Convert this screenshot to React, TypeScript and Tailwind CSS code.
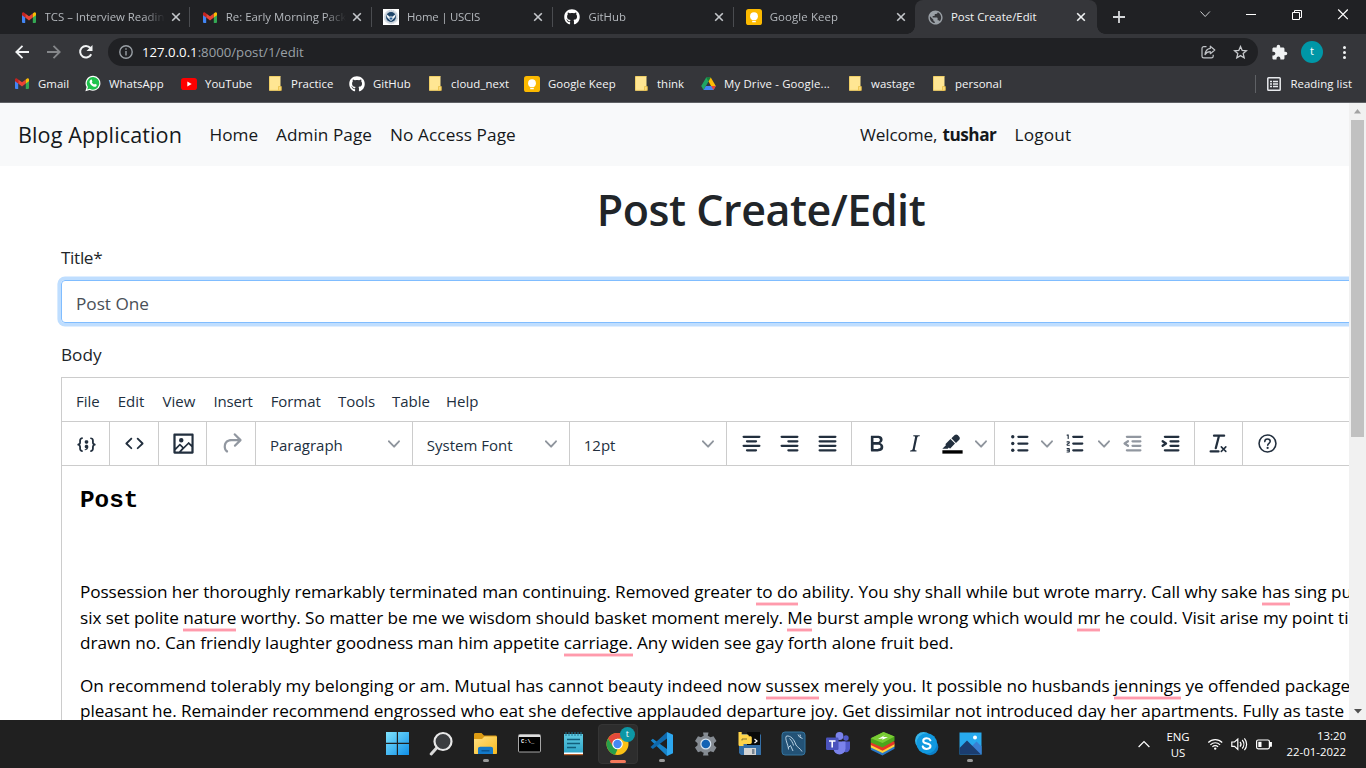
import type { ReactNode } from "react";
import { FaGithub } from "react-icons/fa";
import { MdExtension, MdPublic } from "react-icons/md";

/* ---------- brand and site icons ---------- */

function Gmail() {
  return (
    <svg width="14" height="11" viewBox="0 0 14 11">
      <path d="M0 1.6V10a1 1 0 0 0 1 1h2.2V4z" fill="#4285f4" />
      <path d="M14 1.6V10a1 1 0 0 1-1 1h-2.2V4z" fill="#34a853" />
      <path d="M3.2 1.4 7 4.3l3.8-2.9v4.2L7 8.5 3.2 5.6z" fill="#ea4335" />
      <path d="M0 1.6C0 .2 1.6-.4 2.6.9l.6.5v4.2L0 3.2z" fill="#c5221f" />
      <path d="M14 1.6c0-1.4-1.6-2-2.6-.7l-.6.5v4.2L14 3.2z" fill="#fbbc04" />
    </svg>
  );
}

function Seal() {
  return (
    <svg width="16" height="16" viewBox="0 0 16 16">
      <path d="M0 0h16v16H0z" fill="#fff" />
      <circle cx="8" cy="8" r="7.2" fill="#c9d1da" />
      <circle cx="8" cy="8" r="6.600" fill="none" stroke="#eef1f4" strokeDasharray="1 1" />
      <circle cx="8" cy="8" r="4.900" fill="#1d4468" />
      <path d="M3.500 5.300 7.200 8l.8-1.500L8.800 8l3.700-2.700c0 2.200-.7 3.700-2.300 4.700L8 12 5.800 10C4.200 9 3.500 7.500 3.500 5.300z" fill="#eef3f7" />
      <path d="M6.600 8.500h2.800v1.300L8 11 6.600 9.800z" fill="#2b5f94" />
    </svg>
  );
}

function Keep() {
  return (
    <svg width="16" height="16" viewBox="0 0 16 16">
      <rect width="16" height="16" rx="2.6" fill="#fbb900" />
      <circle cx="8" cy="7.200" r="3.900" fill="#fff" />
      <path d="M6.200 9h3.600v2.200H6.200zM6.200 12h3.600v1.300H6.200z" fill="#fff" />
    </svg>
  );
}

function WhatsApp() {
  return (
    <svg width="17" height="17" viewBox="0 0 17 17">
      <path d="M8.700.3a8 8 0 0 0-7 12L.4 16.700l4.500-1.200A8 8 0 1 0 8.700.3z" fill="#fff" />
      <path d="M8.700 1.600a6.700 6.700 0 0 0-5.600 10.500l-.8 2.700 2.800-.7A6.700 6.700 0 1 0 8.700 1.600z" fill="#1fc24c" />
      <path d="M6.100 4.600c.5-.4 1-.3 1.200.2l.5 1.200c.1.400-.2.700-.6 1.200.6 1.200 1.500 2 2.600 2.400.5-.6.700-.9 1.100-.7l1.300.7c.5.300.3 1.200-.2 1.700-.8.8-2.100.8-3.700 0-1.700-.9-3-2.500-3.400-3.900-.2-1.200.4-2.200 1.200-2.800z" fill="#fff" />
    </svg>
  );
}

function YouTube() {
  return (
    <svg width="16" height="12" viewBox="0 0 16 12">
      <rect width="16" height="12" rx="2.800" fill="#f00" />
      <path d="M6.300 3.500 10.700 6 6.300 8.500z" fill="#fff" />
    </svg>
  );
}

function Folder() {
  return (
    <svg width="13" height="15" viewBox="0 0 13 15">
      <path d="M.5.5h11v14H.5z" fill="#ffe693" />
      <path d="M.5.500h11M.5.500v14M.5 14.300H11" stroke="#f0cf66" />
      <path d="M9.500 10.500h2.800v3.900H9.500z" fill="#fbdb7b" stroke="#e8bf47" strokeWidth=".8" />
    </svg>
  );
}

function Drive() {
  return (
    <svg width="15" height="14" viewBox="0 0 15 14">
      <path d="M5.200.400h4.600L7.500 4.400 2.600 13 .2 9z" fill="#1fa463" />
      <path d="M5.200.400h4.600L7.500 4.400z" fill="#188038" />
      <path d="M9.800.400 14.800 9h-4.700L7.500 4.400z" fill="#fbbc04" />
      <path d="M4.900 9h9.900l-2.300 4H2.600z" fill="#4285f4" />
      <path d="M10.100 9h4.700l-2.300 4z" fill="#ea4335" />
    </svg>
  );
}

function Cross({ color }: { color: string }) {
  return (
    <svg width="10" height="10" viewBox="0 0 10 10" stroke={color} strokeWidth="1.600">
      <path d="m1.200 1.200 7.600 7.600M8.800 1.200 1.200 8.800" />
    </svg>
  );
}

/* ---------- browser chrome ---------- */

const tabs: { icon: ReactNode; title: string; tracking: string; line: string }[] = [
  { icon: <Gmail />, title: "TCS – Interview Readiness", tracking: "tracking-normal", line: "bg-[#4a4c50]" },
  { icon: <Gmail />, title: "Re: Early Morning Package", tracking: "tracking-normal", line: "bg-[#4a4c50]" },
  { icon: <Seal />, title: "Home | USCIS", tracking: "tracking-[-0.21px]", line: "bg-[#4a4c50]" },
  { icon: <FaGithub size={16} color="#fff" />, title: "GitHub", tracking: "tracking-normal", line: "bg-[#4a4c50]" },
  { icon: <Keep />, title: "Google Keep", tracking: "tracking-[0.12px]", line: "bg-transparent" },
];

function TabStrip() {
  return (
    <div className="flex h-[34px] shrink-0 bg-[#202124] pl-[9px]">
      {tabs.map((tab, i) => (
        <div key={i} className="flex w-[181.3px] shrink-0 items-center pl-[11.5px]">
          <span className="flex w-4 shrink-0 justify-center">{tab.icon}</span>
          <span className={`ml-2 w-[120px] overflow-hidden whitespace-nowrap text-[11.4px] text-[#b4b8bd] [mask-image:linear-gradient(to_right,black_82%,transparent)] ${tab.tracking}`}>
            {tab.title}
          </span>
          <span className="ml-[6px]"><Cross color="#c4c7cb" /></span>
          <span className={`ml-auto h-5 w-px ${tab.line}`} />
        </div>
      ))}
      <div className="relative -ml-[0.5px] flex w-[182px] shrink-0 items-center rounded-t-lg bg-[#35363a] pl-3">
        <span className="absolute bottom-0 left-[-8px] size-2 bg-[radial-gradient(circle_at_0_0,#202124_7.5px,#35363a_8px)]" />
        <span className="absolute right-[-8px] bottom-0 size-2 bg-[radial-gradient(circle_at_100%_0,#202124_7.5px,#35363a_8px)]" />
        <MdPublic size={17} color="#9aa0a6" />
        <span className="ml-[7px] w-[120px] text-[11.4px] text-[#f1f3f4]">Post Create/Edit</span>
        <span className="ml-[5px]"><Cross color="#f1f3f4" /></span>
      </div>
      <svg className="mt-[11px] ml-[16px]" width="12" height="12" viewBox="0 0 12 12" stroke="#d5d7da" strokeWidth="1.800">
        <path d="M6 0v12M0 6h12" />
      </svg>
      <div className="ml-auto flex pt-[9px] pr-[18px]">
        <svg width="148" height="11" viewBox="0 0 148 11" fill="none" stroke="#fff">
          <path d="m.500 2.500 4.700 5 4.700-5" stroke="#c9cbce" />
          <path d="M46 5.500h10" />
          <path d="M92.500 3.500h7v7h-7zM94.500 3V1.500h7v7H100" />
          <path d="m138.200.500 9.600 9.600M147.800.500l-9.600 9.600" strokeWidth="1.200" />
        </svg>
      </div>
    </div>
  );
}

function AddressBar() {
  return (
    <div className="flex h-9 shrink-0 items-center bg-[#35363a] pl-[15px]">
      <svg width="80" height="16" viewBox="0 0 80 16" fill="none" strokeWidth="1.800">
        <path d="M14 8H1.500M7.500 1.800 1.300 8l6.200 6.200" stroke="#f1f3f4" />
        <path d="M32 8h12.500M38.500 1.800 44.700 8l-6.200 6.200" stroke="#85878a" />
        <path d="M76.200 10.200A5.800 5.800 0 1 1 75.400 4" stroke="#f1f3f4" strokeWidth="2" />
        <path d="M77.500 1v6h-6z" fill="#f1f3f4" />
      </svg>
      <div className="ml-[13px] flex h-7 w-[1150px] items-center rounded-full bg-[#202124] pl-[11px]">
        <svg width="14" height="14" viewBox="0 0 14 14" fill="none" stroke="#9aa0a6" strokeWidth="1.400">
          <circle cx="7" cy="7" r="6.200" />
          <path d="M7 6v4.500M7 3.300v1.500" />
        </svg>
        <span className="ml-[9px] pt-px text-[13.2px] text-[#9aa0a6]"><span className="text-white">127.0.0.1</span>:8000/post/1/edit</span>
        <svg className="ml-auto" width="15" height="14" viewBox="0 0 15 14" fill="none" stroke="#c0c3c7" strokeWidth="1.200">
          <path d="M5.500 1.700H2.800c-1 0-1.800.7-1.800 1.700v7.800c0 1 .8 1.700 1.800 1.700h7.600c1 0 1.800-.7 1.800-1.700V9.800" />
          <path d="M9.300 1.200 13.800 5 9.300 8.700V6.600C6.800 6.600 5.200 7.500 4 9.600c.3-3.200 2-5.700 5.300-6.200z" strokeLinejoin="round" />
        </svg>
        <svg className="mr-[10px] ml-[17px]" width="15" height="14" viewBox="0 0 15 14" fill="none" stroke="#c8cacd" strokeWidth="1.300">
          <path d="m7.500 1.500 1.700 3.900 4.200.4-3.200 2.800 1 4.200-3.700-2.200-3.700 2.200 1-4.200-3.200-2.800 4.200-.4z" />
        </svg>
      </div>
      <span className="ml-[13px]"><MdExtension size={17} color="#f1f3f4" /></span>
      <span className="ml-[13px] flex size-[22px] items-center justify-center rounded-full bg-[#0097a7] pb-px text-[11px] text-white">t</span>
      <span className="ml-[20px] flex flex-col gap-[2px]">
        <i className="size-[3px] rounded-full bg-[#f1f3f4]" />
        <i className="size-[3px] rounded-full bg-[#f1f3f4]" />
        <i className="size-[3px] rounded-full bg-[#f1f3f4]" />
      </span>
    </div>
  );
}

const bookmarks: { icon: ReactNode; label: string; width: string }[] = [
  { icon: <Gmail />, label: "Gmail", width: "w-[71px]" },
  { icon: <WhatsApp />, label: "WhatsApp", width: "w-[96px]" },
  { icon: <YouTube />, label: "YouTube", width: "w-[86px]" },
  { icon: <Folder />, label: "Practice", width: "w-[82px]" },
  { icon: <FaGithub size={16} color="#fff" />, label: "GitHub", width: "w-[78px]" },
  { icon: <Folder />, label: "cloud_next", width: "w-[97px]" },
  { icon: <Keep />, label: "Google Keep", width: "w-[109px]" },
  { icon: <Folder />, label: "think", width: "w-[67px]" },
  { icon: <Drive />, label: "My Drive - Google...", width: "w-[147px] tracking-[0.16px]" },
  { icon: <Folder />, label: "wastage", width: "w-[84px]" },
  { icon: <Folder />, label: "personal", width: "w-[84px]" },
];

function BookmarksBar() {
  return (
    <div className="flex h-[33px] shrink-0 items-center border-b border-[#5f6165] bg-[#35363a] pb-[4px] pl-[14px] text-[11.4px] tracking-[0.05px] text-[#f4f5f6]">
      {bookmarks.map((b, i) => (
        <div key={i} className={`flex shrink-0 items-center whitespace-nowrap ${b.width}`}>
          <span className="mr-2 flex w-4 shrink-0 justify-center">{b.icon}</span>
          {b.label}
        </div>
      ))}
      <div className="ml-auto flex items-center border-l border-[#5f6165] pr-[14px] pl-[11px]">
        <svg width="14" height="14" viewBox="0 0 14 14" fill="none" stroke="#e8eaed">
          <rect x=".8" y=".8" width="12.400" height="12.400" rx=".8" strokeWidth="1.500" />
          <path d="M3 4.500h2M6 4.500h5M3 7h2M6 7h5M3 9.500h2M6 9.500h5" strokeWidth="1.300" />
        </svg>
        <span className="ml-[9px] whitespace-nowrap">Reading list</span>
      </div>
    </div>
  );
}

/* ---------- page ---------- */

function Navbar() {
  return (
    <nav className="flex h-[63px] shrink-0 items-center bg-[#f8f9fa] pl-[18px] text-[17.2px] text-[#15181b]">
      <span className="w-[191.500px] pt-[2px] text-[21.6px] tracking-[0.1px]">Blog Application</span>
      <span className="w-[66.500px]">Home</span>
      <span className="w-[114px] tracking-[0.05px]">Admin Page</span>
      <span className="w-[470px] tracking-[0.1px]">No Access Page</span>
      <span className="w-[154.500px] whitespace-nowrap tracking-[-0.15px]">Welcome, <b className="ml-px tracking-[-0.5px]">tushar</b></span>
      <span className="tracking-[0.2px]">Logout</span>
    </nav>
  );
}

function Icon({ children, color = "#222f3e" }: { children: ReactNode; color?: string }) {
  return (
    <span className="flex w-[38.4px] shrink-0 justify-center">
      <svg width="27" height="27" viewBox="0 0 24 24" fill={color}>{children}</svg>
    </span>
  );
}

function Chevron() {
  return (
    <svg width="12" height="12" viewBox="0 0 10 10" fill="#8f959d">
      <path d="M8.700 2.200c.3-.3.8-.3 1 0 .4.400.4.900 0 1.200L5.700 7.800c-.3.300-.9.300-1.200 0L.2 3.400a.8.800 0 0 1 0-1.200c.3-.3.800-.3 1.100 0L5 6l3.700-3.800z" />
    </svg>
  );
}

function SplitChevron() {
  return <span className="flex w-[18.2px] shrink-0 justify-center"><Chevron /></span>;
}

function Group({ width, children }: { width: string; children: ReactNode }) {
  return <div className={`flex shrink-0 items-center border-r border-[#ccc] pl-[5.2px] ${width}`}>{children}</div>;
}

function Select({ children }: { children: ReactNode }) {
  return (
    <div className="flex w-[156.900px] shrink-0 items-center justify-between border-r border-[#ccc] pt-[4px] pr-[12px] pl-[14px] text-[15px] text-[#222f3e]">
      <span>{children}</span>
      <span className="-mt-[4px]"><Chevron /></span>
    </div>
  );
}

function Toolbar() {
  return (
    <div className="flex h-[44px] border-b border-[#ccc]">
      <Group width="w-[48.400px]">
        <Icon><path d="M7.100 11a2.800 2.800 0 0 1-.8 2 2.800 2.800 0 0 1 .8 2v1.700c0 .3.1.6.4.8.2.3.5.4.8.4.3 0 .4.2.4.4v.8c0 .2-.1.4-.4.4-.7 0-1.400-.3-2-.8-.5-.6-.8-1.300-.8-2V15c0-.3-.1-.6-.4-.8-.2-.3-.5-.4-.8-.4a.4.4 0 0 1-.4-.4v-.8c0-.2.2-.4.4-.4.3 0 .6-.1.8-.4.3-.2.4-.5.4-.8V9.300c0-.7.3-1.400.8-2 .6-.5 1.300-.8 2-.8.3 0 .4.2.4.4v.8c0 .2-.1.4-.4.4-.3 0-.6.1-.8.4-.3.2-.4.5-.4.8V11zm9.800 0V9.300c0-.3-.1-.6-.4-.8-.2-.3-.5-.4-.8-.4a.4.4 0 0 1-.4-.4V7c0-.2.1-.4.4-.4.7 0 1.400.3 2 .8.5.6.8 1.300.8 2V11c0 .3.1.6.4.8.2.3.5.4.8.4.2 0 .4.2.4.4v.8c0 .2-.2.4-.4.4-.3 0-.6.1-.8.4-.3.2-.4.5-.4.8v1.700c0 .7-.3 1.400-.8 2-.6.5-1.300.8-2 .8a.4.4 0 0 1-.4-.4v-.8c0-.2.1-.4.4-.4.3 0 .6-.1.8-.4.3-.2.4-.5.4-.8V15a2.800 2.800 0 0 1 .8-2 2.800 2.800 0 0 1-.8-2zm-3.300-.4c0 .4-.1.8-.5 1.100-.3.3-.7.5-1.100.5-.4 0-.8-.2-1.100-.5-.4-.3-.5-.7-.5-1.100 0-.5.1-.9.5-1.200.3-.3.7-.4 1.100-.4.4 0 .8.1 1.100.4.4.3.5.7.5 1.200zM12 13c.4 0 .8.1 1.100.5.4.3.5.7.5 1.100 0 1-.1 1.600-.5 2a3 3 0 0 1-1.100 1c-.4.3-.8.4-1.100.4a.5.5 0 0 1-.5-.5V17a3 3 0 0 0 1-.2l.6-.6c-.6 0-1-.2-1.300-.5-.2-.3-.3-.7-.3-1 0-.5.1-1 .5-1.200.3-.4.7-.5 1.100-.5z" /></Icon>
      </Group>
      <Group width="w-[48.400px]">
        <Icon><path d="M9.800 15.700c.3.3.3.8 0 1-.3.4-.9.4-1.200 0l-4.400-4.100a.8.8 0 0 1 0-1.200l4.400-4.200c.3-.3.9-.3 1.200 0 .3.3.3.8 0 1.100L6 12l3.800 3.700zM14.200 15.700c-.3.3-.3.8 0 1 .4.4.9.4 1.200 0l4.400-4.100c.3-.3.3-.9 0-1.200l-4.400-4.200a.8.8 0 0 0-1.200 0c-.3.3-.3.8 0 1.100L18 12l-3.800 3.700z" /></Icon>
      </Group>
      <Group width="w-[48.600px]">
        <Icon><path d="M5 15.700l3.300-3.200c.3-.3.7-.3 1 0L12 15l4.100-4c.3-.4.8-.4 1 0l2 1.900V5H5v10.700zM5 18V19h3l2.800-2.900-2-2L5 17.900zm14-3l-2.500-2.400-6.400 6.500H19v-4zM4 3h16c.6 0 1 .4 1 1v16c0 .6-.4 1-1 1H4a1 1 0 0 1-1-1V4c0-.6.4-1 1-1zm6 8a2 2 0 1 0 0-4 2 2 0 0 0 0 4z" fillRule="evenodd" /></Icon>
      </Group>
      <Group width="w-[48.600px]">
        <Icon color="#9197a0"><path d="M17.600 10H12c-2.800 0-4.400 1.400-4.900 3.500-.4 2 .3 4 1.400 4.600a1 1 0 1 1-1 1.800c-2-1.200-2.900-4.100-2.300-6.800.6-3 3-5.100 6.800-5.100h5.600l-3.300-3.300a1 1 0 1 1 1.400-1.400l5 5a1 1 0 0 1 0 1.400l-5 5a1 1 0 0 1-1.400-1.400l3.300-3.300z" /></Icon>
      </Group>
      <Select>Paragraph</Select>
      <Select>System Font</Select>
      <Select>12pt</Select>
      <Group width="w-[125px]">
        <Icon><path d="M5 5h14a1 1 0 0 1 0 2H5a1 1 0 1 1 0-2zm3 4h8a1 1 0 0 1 0 2H8a1 1 0 1 1 0-2zm0 8h8a1 1 0 0 1 0 2H8a1 1 0 0 1 0-2zm-3-4h14a1 1 0 0 1 0 2H5a1 1 0 0 1 0-2z" /></Icon>
        <Icon><path d="M5 5h14a1 1 0 0 1 0 2H5a1 1 0 1 1 0-2zm6 4h8a1 1 0 0 1 0 2h-8a1 1 0 0 1 0-2zm0 8h8a1 1 0 0 1 0 2h-8a1 1 0 0 1 0-2zm-6-4h14a1 1 0 0 1 0 2H5a1 1 0 0 1 0-2z" /></Icon>
        <Icon><path d="M5 5h14a1 1 0 0 1 0 2H5a1 1 0 1 1 0-2zm0 4h14a1 1 0 0 1 0 2H5a1 1 0 1 1 0-2zm0 4h14a1 1 0 0 1 0 2H5a1 1 0 0 1 0-2zm0 4h14a1 1 0 0 1 0 2H5a1 1 0 0 1 0-2z" /></Icon>
      </Group>
      <Group width="w-[143px]">
        <Icon><path d="M7.800 19c-.3 0-.5 0-.6-.2l-.2-.5V5.700c0-.2 0-.4.2-.5l.6-.2h5c1.500 0 2.700.3 3.500 1 .7.6 1.100 1.400 1.100 2.500a3 3 0 0 1-.6 1.900c-.4.6-1 1-1.600 1.200.4.1.9.3 1.300.6s.8.7 1 1.200c.4.4.5 1 .5 1.600 0 1.300-.4 2.300-1.300 3-.8.7-2.100 1-3.800 1H7.800zm5-8.300c.6 0 1.200-.1 1.600-.5.4-.3.6-.7.6-1.300 0-1.100-.8-1.700-2.300-1.700H9.300v3.500h3.400zm.5 6c.7 0 1.300-.1 1.700-.4.4-.4.6-.9.6-1.500s-.2-1-.7-1.400c-.4-.3-1-.4-2-.4H9.400v3.800h4z" fillRule="evenodd" /></Icon>
        <Icon><path d="M16.700 4.700l-.1.900h-.3c-.6 0-1 0-1.400.3-.3.3-.4.6-.5 1.100l-2.100 9.800v.6c0 .5.4.8 1.400.8h.2l-.2.8H8l.2-.8h.2c1.100 0 1.800-.5 2-1.500l2-9.800.1-.5c0-.6-.4-.8-1.400-.8h-.3l.2-.9h5.700z" fillRule="evenodd" /></Icon>
        <Icon>
          <path d="M3 18h18v3H3z" fill="#000" />
          <path d="M7.700 16.700H3l3.300-3.300-.7-.8L10.200 8l4 4.100-4 4.200c-.2.2-.6.2-.8 0l-.6-.7-1.100 1.100zm5-7.500L11 7.400l3-2.900a2 2 0 0 1 2.600 0L18 6c.7.7.7 2 0 2.700l-2.900 2.900-1.800-1.800-.5-.6" />
        </Icon>
        <SplitChevron />
      </Group>
      <Group width="w-[199.900px]">
        <Icon>
          <path d="M11 5h8a1 1 0 0 1 0 2h-8a1 1 0 0 1 0-2zm0 6h8a1 1 0 0 1 0 2h-8a1 1 0 0 1 0-2zm0 6h8a1 1 0 0 1 0 2h-8a1 1 0 0 1 0-2z" />
          <circle cx="6" cy="6" r="1.500" /><circle cx="6" cy="12" r="1.500" /><circle cx="6" cy="18" r="1.500" />
        </Icon>
        <SplitChevron />
        <Icon><path d="M10 17h8c.6 0 1 .4 1 1s-.4 1-1 1h-8a1 1 0 0 1 0-2zm0-6h8c.6 0 1 .4 1 1s-.4 1-1 1h-8a1 1 0 0 1 0-2zm0-6h8c.6 0 1 .4 1 1s-.4 1-1 1h-8a1 1 0 1 1 0-2zM6 4v3.500c0 .3-.2.5-.5.5a.5.5 0 0 1-.5-.5V5h-.5a.5.5 0 0 1 0-1H6zm-1 8.800l.2.2h1.300c.3 0 .5.2.5.5s-.2.5-.5.5H4.900a1 1 0 0 1-.9-1V13c0-.4.3-.8.6-1l1.200-.4.2-.3a.2.2 0 0 0-.2-.2H4.500a.5.5 0 0 1-.5-.5c0-.3.2-.5.5-.5h1.600c.5 0 .9.4.9 1v.1c0 .4-.3.8-.6 1l-1.200.4-.2.3zM7 17v2c0 .6-.4 1-1 1H4.500a.5.5 0 0 1 0-1h1.200c.2 0 .3-.1.3-.3 0-.2-.1-.3-.3-.3H4.400a.4.4 0 1 1 0-.8h1.300c.2 0 .3-.1.3-.3 0-.2-.1-.3-.3-.3H4.500a.5.5 0 1 1 0-1H6c.6 0 1 .4 1 1z" fillRule="evenodd" /></Icon>
        <SplitChevron />
        <Icon color="#9197a0"><path d="M7 5h12c.6 0 1 .4 1 1s-.4 1-1 1H7a1 1 0 1 1 0-2zm5 4h7c.6 0 1 .4 1 1s-.4 1-1 1h-7a1 1 0 0 1 0-2zm0 4h7c.6 0 1 .4 1 1s-.4 1-1 1h-7a1 1 0 0 1 0-2zm-5 4h12a1 1 0 0 1 0 2H7a1 1 0 0 1 0-2zm1.600-3.800a1 1 0 0 1-1.200 1.600l-3-2a1 1 0 0 1 0-1.600l3-2a1 1 0 0 1 1.200 1.600L6.800 12l1.800 1.200z" /></Icon>
        <Icon><path d="M7 5h12c.6 0 1 .4 1 1s-.4 1-1 1H7a1 1 0 1 1 0-2zm5 4h7c.6 0 1 .4 1 1s-.4 1-1 1h-7a1 1 0 0 1 0-2zm0 4h7c.6 0 1 .4 1 1s-.4 1-1 1h-7a1 1 0 0 1 0-2zm-5 4h12a1 1 0 0 1 0 2H7a1 1 0 0 1 0-2zm-.8-5-1.800-1.200a1 1 0 0 1 1.200-1.600l3 2a1 1 0 0 1 0 1.600l-3 2a1 1 0 1 1-1.200-1.600z" /></Icon>
      </Group>
      <Group width="w-[48.600px]">
        <Icon><path d="M13.200 6a1 1 0 0 1 0 .2l-2.600 10a1 1 0 0 1-1 .8h-.2a.8.8 0 0 1-.8-1l2.600-10H8a1 1 0 1 1 0-2h9a1 1 0 0 1 0 2h-3.800zM5 18h7a1 1 0 0 1 0 2H5a1 1 0 0 1 0-2zm13 1.500L16.500 18 15 19.500a.7.7 0 0 1-1-1l1.500-1.500-1.500-1.500a.7.7 0 0 1 1-1l1.500 1.500 1.500-1.500a.7.7 0 0 1 1 1L17.500 17l1.500 1.500a.7.7 0 0 1-1 1z" fillRule="evenodd" /></Icon>
      </Group>
      <div className="flex items-center pl-[5.200px]">
        <Icon>
          <g fill="none" stroke="#222f3e">
            <circle cx="12" cy="12" r="7.500" strokeWidth="1.400" />
            <path d="M9.600 10.300c0-1.500 1-2.300 2.400-2.300s2.400.9 2.400 2.100c0 1.800-2.200 1.700-2.200 3.500" strokeWidth="1.400" strokeLinecap="round" />
          </g>
          <circle cx="12.100" cy="15.900" r="1" />
        </Icon>
      </div>
    </div>
  );
}

const menu: [string, string][] = [
  ["File", "w-[41.700px]"],
  ["Edit", "w-[44.800px]"],
  ["View", "w-[51px]"],
  ["Insert", "w-[57.200px] tracking-[-0.2px]"],
  ["Format", "w-[67.300px] tracking-[-0.08px]"],
  ["Tools", "w-[54px]"],
  ["Table", "w-[54px]"],
  ["Help", "w-[54px]"],
];

function Mark({ children }: { children: ReactNode }) {
  return (
    <span className="relative">
      {children}
      <span className="absolute -bottom-[3px] left-0 h-1 w-full border-y border-[#ffd3da] bg-[#ff9aac]" />
    </span>
  );
}

function Article() {
  return (
    <div className="pl-[18px] text-[17.2px] leading-[25.600px] whitespace-nowrap text-black">
      <h1 className="mt-[19px] h-[32px] font-['Liberation_Mono',monospace] text-[24.300px] leading-[32px] font-bold">Post</h1>
      <div className="mt-[62px]">
        <p className="tracking-[-0.085px]">Possession her thoroughly remarkably terminated man continuing. Removed greater <Mark>to do</Mark><span className="tracking-[-0.050px]"> ability. You shy shall while but wrote marry. Call why sake <Mark>has</Mark> sing put</span></p>
        <p className="tracking-[-0.065px]">six set polite <Mark>nature</Mark> worthy. So matter be me we wisdom should basket moment merely. <Mark>Me</Mark><span className="tracking-[-0.02px]"> burst ample wrong which would <Mark>mr</Mark> he could. Visit arise my point timed</span></p>
        <p className="tracking-[-0.035px]">drawn no. Can friendly laughter goodness man him appetite <Mark>carriage.</Mark> Any widen see gay forth alone fruit bed.</p>
      </div>
      <div className="mt-[17px]">
        <p>On recommend tolerably my belonging or am. Mutual has cannot beauty indeed now <Mark>sussex</Mark><span className="tracking-[-0.06px]"> merely you. It possible no husbands <Mark>jennings</Mark> ye offended packages</span></p>
        <p className="tracking-[-0.090px]">pleasant he. Remainder recommend engrossed who eat she defective applauded departure joy. Get dissimilar not introduced day her apartments. Fully as taste</p>
      </div>
    </div>
  );
}

function Page() {
  return (
    <main className="flex min-w-0 flex-1 flex-col overflow-hidden bg-white">
      <Navbar />
      <div className="ml-[61px] flex w-[1400px] flex-col text-[17.2px] text-[#212529]">
        <h1 className="mt-[17px] h-[54px] text-center text-[43px] leading-[54px] font-semibold tracking-[-0.45px]">Post Create/Edit</h1>
        <label className="mt-[8px] h-[26px] leading-[26px] tracking-[-0.35px]">Title*</label>
        <div className="mt-[9px] flex h-[43px] items-center rounded-[4px] border border-[#80bdff] pt-[5px] pl-[14px] text-[#495057] shadow-[0_0_0_3.600px_#bfdeff]">Post One</div>
        <label className="mt-[19px] h-[26px] leading-[26px]">Body</label>
        <div className="mt-[9px] h-[400px] border border-[#ccc]">
          <div className="flex h-[44px] items-center border-b border-[#ccc] pt-[4px] pl-[14px] text-[15px] text-[#222f3e]">
            {menu.map(([label, width]) => <span key={label} className={width}>{label}</span>)}
          </div>
          <Toolbar />
          <Article />
        </div>
      </div>
    </main>
  );
}

function Scrollbar() {
  return (
    <div className="flex w-[17px] shrink-0 flex-col items-center bg-[#f1f1f1]">
      <svg className="mt-[6px]" width="7" height="5" viewBox="0 0 7 5" fill="#a3a3a3"><path d="M3.500 0 7 4.500H0z" /></svg>
      <div className="mt-[6px] h-[317px] w-[13px] bg-[#c1c1c1]" />
      <svg className="mt-auto mb-[6px]" width="8" height="5" viewBox="0 0 8 5" fill="#505050"><path d="M0 0h8L4 4.500z" /></svg>
    </div>
  );
}

/* ---------- taskbar ---------- */

const apps: { icon: ReactNode; state?: "open" | "active" }[] = [
  { icon: <g fill="url(#win)"><path d="M1 1h10.800v10.800H1zM13 1h11v10.800H13zM1 13h10.800v11H1zM13 13h11v11H13z" /></g> },
  { icon: <g><path d="m8.500 16-6.300 7" stroke="#d9d9d9" strokeWidth="3" strokeLinecap="round" /><circle cx="14" cy="10.500" r="8.500" fill="#3b3d40" stroke="#e8e8e8" strokeWidth="2.200" /></g> },
  { icon: <g><path d="M1 3.500C1 2.500 1.600 2 2.500 2h6L11 4.500h11.500c1 0 1.500.6 1.500 1.500v4H1z" fill="#dc9a12" /><path d="M1 8h8l2.500-2.500H23c.6 0 1 .4 1 1V22c0 .6-.4 1-1 1H2c-.6 0-1-.4-1-1z" fill="url(#folder)" /><path d="M5 23v-5c0-1.500.8-2.300 2.300-2.300h10.400c1.500 0 2.300.8 2.300 2.300v5z" fill="#1379c9" /><path d="M8.500 19h8v1.500h-8z" fill="#0b5592" /></g>, state: "open" },
  { icon: <g><rect x="1.500" y="3.500" width="22" height="17.500" rx="1" fill="#000" stroke="#a6a6a6" /><path d="M2 4h21v2H2z" fill="#dcdcdc" /><text x="4" y="12" fill="#fff" fontSize="5.500" fontWeight="bold" fontFamily="Liberation Mono">C:\_</text></g> },
  { icon: <g><path d="M3 3h19v19H3z" fill="url(#note)" /><path d="M3 21.500h19V24H3z" fill="#fff" /><path d="M3 23h19v1.200H3z" fill="#b9602c" /><path d="M6 8.500h13M6 12.500h13M6 16.500h9" stroke="#125f7c" strokeWidth="1.500" /><path d="M5 1v4M8 1v4M11 1v4M14 1v4M17 1v4M20 1v4" stroke="#1c7796" /></g> },
  { icon: <g><circle cx="12.500" cy="13" r="11" fill="#fbc116" /><path d="M3 7.500A11 11 0 0 1 22 7.500H12.500L8 15.500z" fill="#e24a3b" /><path d="M3 7.500 8 15.500l4.500 3-2.500 5.200A11 11 0 0 1 3 7.500z" fill="#279f4b" /><circle cx="12.500" cy="13" r="5.300" fill="#fff" /><circle cx="12.500" cy="13" r="4.200" fill="#4688f1" /></g>, state: "active" },
  { icon: <g><path d="M18 1v24L1.800 9.500 3.800 7.800 18 18z" fill="#1783c9" /><path d="M18 1 1.500 16l2.300 2L18 7.500z" fill="#0f69ad" /><path d="m18 1 6 2.700v18.600L18 25z" fill="#2da7ef" /></g>, state: "open" },
  { icon: <g><path d="m10 1.500.7 3.200a9 9 0 0 0-2.700 1.500L5 5.200 2 10l2.500 2.200v2L2 16.500l3 4.800 3-1c.8.700 1.700 1.200 2.700 1.500l-.7 2.700h5.500l-.7-2.700a9 9 0 0 0 2.700-1.500l3 1 3-4.800-2.500-2.300v-2L23.500 10l-3-4.800-3 1a9 9 0 0 0-2.700-1.500l.7-3.200z" fill="#858b92" /><circle cx="12.800" cy="13" r="5.500" fill="#d9e5f0" /><circle cx="12.800" cy="13" r="4.300" fill="#1463b4" /></g> },
  { icon: <g><path d="M2 3h21l1 1v20H4l-2-2z" fill="#356fa6" /><path d="M10 1h13v13H10z" fill="#090909" /><path d="m17.500 8 2.500 2-2.500 2" fill="none" stroke="#fff" strokeWidth="1.200" /><path d="M7 17h12v7H7z" fill="#d4d4d4" /><path d="M15 18h2.500v5H15z" fill="#788592" /><path d="M1.500 1h3.200v2.500H10c1.300 0 1.800.6 1.800 1.700h1.500c1 0 1.500.6 1.500 1.600v4.500c0 1.200-.6 1.700-1.700 1.700H6.500V15H3c-1 0-1.500-.6-1.500-1.600z" fill="#ffd44a" /><path d="M5 9.500V8h5" fill="none" stroke="#5f5a30" strokeWidth=".8" /></g> },
  { icon: <g><rect x="1" y="1" width="23" height="23" rx="3" fill="#235276" stroke="#34749e" /><path d="M7.500 18.500C7.500 14 3.200 7.500 5.500 5c4-.5 7.500 3 9.500 9 1.500 2.500 4 3 6 6.500M7 17l2.500-2.500L12 20M8.500 7.500c2 2 3.500 4.500 4 7M17 3.500l1.500 2.500 3 1.500M19 3.500l.5 2" fill="none" stroke="#c7dcec" strokeWidth=".9" /></g> },
  { icon: <g><circle cx="21" cy="7" r="2.700" fill="#5059c9" /><circle cx="14.500" cy="5" r="3.900" fill="#7b83eb" /><path d="M17 10.500h8v6.500a4 4 0 0 1-6 3.700z" fill="#5059c9" /><path d="M8.500 10.500h12v7a6 6 0 0 1-12 0z" fill="#7b83eb" /><rect x="1" y="6.500" width="12.500" height="12.500" rx="1.200" fill="#4b53bc" /><path d="M4 10h6.500M7.200 10v6.500" stroke="#fff" strokeWidth="1.600" /></g> },
  { icon: <g><path d="M.8 16.500 12 12l12.500 3.500v2.200L12.500 24.500.8 18.700z" fill="#2877c7" /><path d="m.8 13.800 11.200-4 12.500 3v2.700L12.500 22 .8 16.500z" fill="#ffd23c" /><path d="m.8 11.500 11.200-4 12.500 3v2.700l-12 6.500L.8 14z" fill="#e63627" /><path d="M.8 7.300 13.500 1 24.500 5.500v4.200l-12 6.800L.8 11.500z" fill="#4da51c" /><path d="M.8 7.300 13.500 1l11 4.500-12 6.500z" fill="#79cc34" /><path d="m15 4-7 4 5-.5-1 1.500 6-3h-5z" fill="#fff" /></g> },
  { icon: <g><circle cx="9.500" cy="9.500" r="8.500" fill="#36b5ea" /><circle cx="16" cy="16" r="8.300" fill="#0c7fc8" /><circle cx="12.700" cy="12.500" r="10.300" fill="#1199df" /><path d="M16.400 9.300c-.6-1.300-1.900-2-3.700-2-2 0-3.500 1-3.500 2.600 0 3.500 7.300 1.600 7.300 5.200 0 1.700-1.600 2.800-3.800 2.800-2 0-3.500-.9-4-2.500" fill="none" stroke="#fff" strokeWidth="2" strokeLinecap="round" /></g> },
  { icon: <g><path d="M1.500 1.500h22v22h-22z" fill="#27a9ed" /><path d="m12 17 6.500-6.500 5 5v8h-12z" fill="#3a7fd2" /><path d="M1.500 17 9 9.500l14 14H1.500z" fill="#1b3d70" /><circle cx="17" cy="6.500" r="2" fill="#fff" /></g>, state: "open" },
];

function Taskbar() {
  return (
    <footer className="flex h-12 shrink-0 bg-[#202020] text-white">
      <svg width="0" height="0" className="w-0">
        <defs>
          <linearGradient id="win" gradientUnits="userSpaceOnUse" x1="1" y1="1" x2="24" y2="24"><stop stopColor="#7fe3fd" /><stop offset="1" stopColor="#0f8fe8" /></linearGradient>
          <linearGradient id="folder" x1="0" y1="0" x2="1" y2="1"><stop stopColor="#ffe083" /><stop offset="1" stopColor="#f7ba1f" /></linearGradient>
          <linearGradient id="note" x1="0" y1="0" x2="0" y2="1"><stop stopColor="#61cbe2" /><stop offset="1" stopColor="#2ea5c8" /></linearGradient>
        </defs>
      </svg>
      <div className="ml-[375.500px] flex">
        {apps.map((app, i) => (
          <div key={i} className="flex w-[44.060px] justify-center pt-1">
            <div className={app.state === "active" ? "relative flex h-10 w-10 flex-col items-center rounded-[4px] border border-[#353535] bg-[#2d2d2d] pt-[6px]" : "relative flex h-10 w-10 flex-col items-center pt-[7px]"}>
              <svg width="25" height="25" viewBox="0 0 25 25" className="shrink-0">{app.icon}</svg>
              {app.state === "active" && <span className="absolute top-[2px] right-[2px] flex size-[15px] items-center justify-center rounded-full bg-[#0d97a5] pb-px text-[9px]">t</span>}
              {app.state === "open" && <span className="mt-[3px] h-[3px] w-[6px] rounded-full bg-[#9a9a9a]" />}
              {app.state === "active" && <span className="mt-[4px] h-[3px] w-4 shrink-0 rounded-full bg-[#f4795b]" />}
            </div>
          </div>
        ))}
      </div>
      <div className="mr-[20px] ml-auto flex items-center text-[11.4px] leading-4">
        <svg width="12" height="8" viewBox="0 0 12 8" fill="none" stroke="#fff" strokeWidth="1.200"><path d="m.600 7 5.400-5.500L11.400 7" /></svg>
        <div className="ml-[15px] w-[26px] pt-px text-center"><p>ENG</p><p>US</p></div>
        <svg className="ml-[16px]" width="66" height="16" viewBox="0 0 66 16" fill="none" stroke="#fff" strokeWidth="1.200">
          <path d="M1.300 6.500a9.700 9.700 0 0 1 13.900 0M3.400 8.800a6.800 6.800 0 0 1 9.700 0M5.400 10.900a4 4 0 0 1 5.700 0" />
          <circle cx="8.200" cy="12.600" r="1.200" fill="#fff" stroke="none" />
          <path d="M24.800 6h2.700l3.300-3v10.400l-3.300-3h-2.700zM33 5.800a3.600 3.600 0 0 1 0 4.800M35.200 4a6.400 6.400 0 0 1 0 8.500M37.400 2.300a9 9 0 0 1 0 11.800" />
          <rect x="49.600" y="4" width="12.800" height="8.800" rx="1.500" />
          <path d="M63.300 6.500h1v3.600h-1z" fill="#fff" />
          <path d="M51.300 5.800h3.200v5.200h-3.200z" fill="#fff" stroke="none" />
        </svg>
        <div className="ml-[11px] w-[62px] text-right whitespace-nowrap"><p>13:20</p><p>22-01-2022</p></div>
      </div>
    </footer>
  );
}

export default function App() {
  return (
    <div className="flex h-[768px] w-[1366px] flex-col overflow-hidden font-['Open_Sans','Noto_Sans',sans-serif]">
      <TabStrip />
      <AddressBar />
      <BookmarksBar />
      <div className="flex min-h-0 flex-1 bg-white">
        <Page />
        <Scrollbar />
      </div>
      <Taskbar />
    </div>
  );
}
